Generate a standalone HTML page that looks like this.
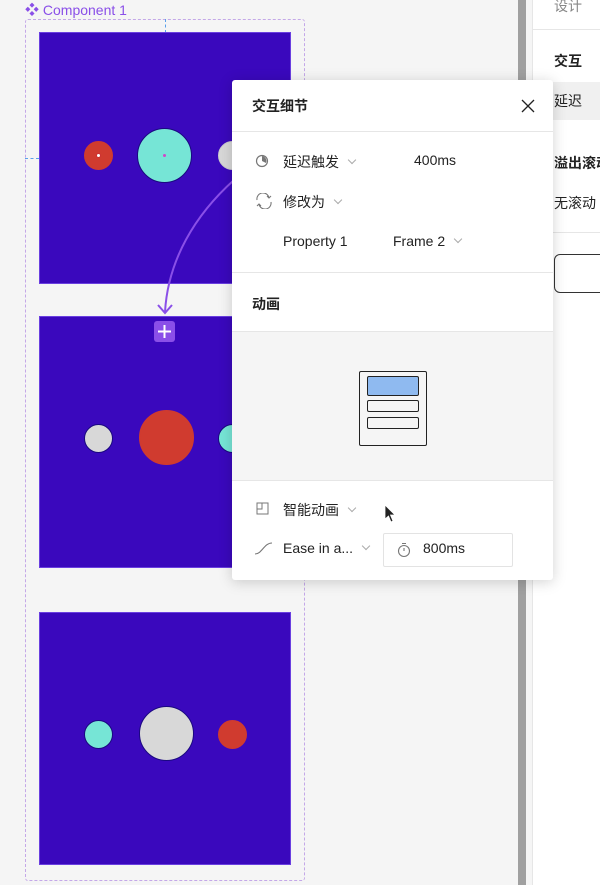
<!DOCTYPE html>
<html><head><meta charset="utf-8"><style>
*{margin:0;padding:0;box-sizing:border-box}
body{width:600px;height:885px;overflow:hidden;background:#f5f5f5;font-family:"Liberation Sans","Noto Sans CJK SC",sans-serif;position:relative;color:#222}
.a{position:absolute}
.frame{position:absolute;left:39px;width:252px;height:252px;background:#3a08bd;border:1px solid #6a3fe0}
.c{position:absolute;border-radius:50%;border:1px solid #1a0880}
.t{position:absolute;font-size:14px;white-space:nowrap}
.chev{display:inline-block;width:6px;height:6px;border-right:1px solid #aaa;border-bottom:1px solid #aaa;transform:rotate(45deg);margin-left:10px;position:relative;top:-4px}
</style></head><body>
<div class="t" style="left:25px;top:0;color:#8a4fe8;font-size:14px">❖ Component 1</div>
<div class="a" style="left:25px;top:19px;width:280px;height:862px;border:1px dashed #c4a8e8;border-radius:3px"></div>
<div class="a" style="left:165px;top:19px;height:14px;border-left:1px dashed #5aa0ea"></div>
<div class="a" style="left:25px;top:158px;width:14px;border-top:1px dashed #5aa0ea"></div>

<div class="frame" style="top:32px">
 <div class="c" style="left:44px;top:108px;width:29px;height:29px;background:#d03b2f;border-color:#d03b2f"></div>
 <div class="a" style="left:56px;top:120px;width:5px;height:5px;border-radius:50%;background:#fff;border:1px solid #c33"></div>
 <div class="c" style="left:97px;top:95px;width:55px;height:55px;background:#76e5d6"></div>
 <div class="a" style="left:123px;top:121px;width:3px;height:3px;border-radius:50%;background:#d048c8"></div>
 <div class="c" style="left:178px;top:108px;width:29px;height:29px;background:#d8d8d8;border-color:#ccc"></div>
</div>
<div class="frame" style="top:316px">
 <div class="c" style="left:44px;top:107px;width:29px;height:29px;background:#d8d8d8"></div>
 <div class="c" style="left:99px;top:93px;width:55px;height:55px;background:#d03b2f;border-color:#d03b2f"></div>
 <div class="c" style="left:178px;top:107px;width:29px;height:29px;background:#76e5d6"></div>
</div>
<div class="frame" style="top:612px;height:253px">
 <div class="c" style="left:44px;top:107px;width:29px;height:29px;background:#76e5d6"></div>
 <div class="c" style="left:99px;top:93px;width:55px;height:55px;background:#d8d8d8"></div>
 <div class="c" style="left:178px;top:107px;width:29px;height:29px;background:#d03b2f;border-color:#d03b2f"></div>
</div>
<svg class="a" style="left:0;top:0" width="600" height="885">
 <path d="M234 180 C195 215 168 260 165 312" fill="none" stroke="#8a4fe8" stroke-width="2"/>
 <path d="M158 305 L165 313 L172 305" fill="none" stroke="#8a4fe8" stroke-width="2"/>
 <rect x="154" y="321" width="21" height="21" rx="3" fill="#8a4fe8"/>
 <path d="M164.5 325v13M158 331.5h13" stroke="#fff" stroke-width="2"/>
</svg>

<div class="a" style="left:518px;top:0;width:8px;height:885px;background:#a0a0a0"></div>
<div class="a" style="left:532px;top:0;width:68px;height:885px;background:#fff;border-left:1px solid #e6e6e6"></div>
<div class="t" style="left:554px;top:-4px;color:#888">设计</div>
<div class="a" style="left:533px;top:29px;width:67px;border-top:1px solid #e6e6e6"></div>
<div class="t" style="left:554px;top:51px;font-weight:bold">交互</div>
<div class="a" style="left:533px;top:82px;width:67px;height:38px;background:#f0f0f0"></div>
<div class="t" style="left:554px;top:91px">延迟</div>
<div class="t" style="left:554px;top:153px;font-weight:bold">溢出滚动</div>
<div class="t" style="left:554px;top:193px">无滚动</div>
<div class="a" style="left:533px;top:232px;width:67px;border-top:1px solid #e6e6e6"></div>
<div class="a" style="left:554px;top:254px;width:60px;height:39px;border:1px solid #333;border-radius:6px"></div>

<div class="a" style="left:232px;top:80px;width:321px;height:500px;background:#fff;border-radius:3px;box-shadow:0 2px 14px rgba(0,0,0,.18)">
 <div class="t" style="left:20px;top:16px;font-weight:bold">交互细节</div>
 <svg class="a" style="left:288px;top:18px" width="16" height="16"><path d="M2 2L14 14M14 2L2 14" stroke="#222" stroke-width="1.3"/></svg>
 <div class="a" style="left:0;top:51px;width:321px;border-top:1px solid #e6e6e6"></div>
 <svg class="a" style="left:23px;top:74px" width="14" height="14"><circle cx="7" cy="7" r="5.5" fill="none" stroke="#777" stroke-width="1.2"/><path d="M7 7V2A5 5 0 0 1 11 9Z" fill="#777"/></svg>
 <div class="t" style="left:51px;top:72px">延迟触发<span class="chev"></span></div>
 <div class="t" style="left:182px;top:72px">400ms</div>
 <svg class="a" style="left:22px;top:113px" width="20" height="16"><path d="M3 7A6 6 0 0 1 15 5M17 9A6 6 0 0 1 5 11" fill="none" stroke="#777" stroke-width="1.1"/><path d="M13 3L15 5L17 3M7 13L5 11L3 13" fill="none" stroke="#777" stroke-width="1.1"/></svg>
 <div class="t" style="left:51px;top:112px">修改为<span class="chev"></span></div>
 <div class="t" style="left:51px;top:153px">Property 1</div>
 <div class="t" style="left:161px;top:153px">Frame 2<span class="chev"></span></div>
 <div class="a" style="left:0;top:192px;width:321px;border-top:1px solid #e6e6e6"></div>
 <div class="t" style="left:20px;top:214px;font-weight:bold">动画</div>
 <div class="a" style="left:0;top:251px;width:321px;height:150px;background:#f5f5f5;border-top:1px solid #e6e6e6;border-bottom:1px solid #e6e6e6">
  <div class="a" style="left:127px;top:39px;width:68px;height:75px;border:1px solid #222;border-radius:2px;background:#f5f5f5"></div>
  <div class="a" style="left:135px;top:44px;width:52px;height:20px;border:1px solid #222;border-radius:2px;background:#8fbaf0"></div>
  <div class="a" style="left:135px;top:68px;width:52px;height:12px;border:1px solid #222;border-radius:2px"></div>
  <div class="a" style="left:135px;top:85px;width:52px;height:12px;border:1px solid #222;border-radius:2px"></div>
 </div>
 <svg class="a" style="left:24px;top:422px" width="14" height="14"><rect x="1" y="1" width="11" height="11" fill="none" stroke="#777"/><path d="M1 7H6V1" fill="none" stroke="#777"/></svg>
 <div class="t" style="left:51px;top:420px">智能动画<span class="chev"></span></div>
 <svg class="a" style="left:152px;top:424px" width="14" height="22"><path d="M1 1L1 15L4.5 12L7 18L9 17L6.5 11L11 11Z" fill="#222" stroke="#fff" stroke-width=".8"/></svg>
 <svg class="a" style="left:22px;top:461px" width="20" height="14"><path d="M1 13C8 13 10 2 18 2" fill="none" stroke="#777" stroke-width="1.1"/></svg>
 <div class="t" style="left:51px;top:460px">Ease in a...<span class="chev"></span></div>
 <div class="a" style="left:151px;top:453px;width:130px;height:34px;border:1px solid #e3e3e3;border-radius:2px"></div>
 <svg class="a" style="left:165px;top:462px" width="14" height="16"><circle cx="7" cy="9" r="5.5" fill="none" stroke="#777" stroke-width="1.1"/><path d="M7 9V6M5 1.5H9" stroke="#777" stroke-width="1.1"/></svg>
 <div class="t" style="left:191px;top:460px">800ms</div>
</div>
</body></html>
